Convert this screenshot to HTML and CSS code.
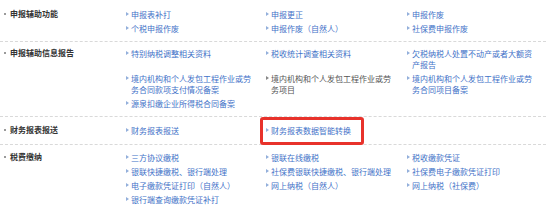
FILE: index.html
```html
<!DOCTYPE html>
<html lang="zh-CN">
<head>
<meta charset="utf-8">
<title>税费申报</title>
<link rel="stylesheet" href="styles.css">
</head>
<body>
<div class="panel">
  <div class="section s1">
    <div class="title">申报辅助功能</div>
    <div class="items">
      <a class="item">申报表补打</a>
      <a class="item">申报更正</a>
      <a class="item">申报作废</a>
      <a class="item">个税申报作废</a>
      <a class="item">申报作废（自然人）</a>
      <a class="item">社保费申报作废</a>
    </div>
  </div>
  <div class="section s2">
    <div class="title">申报辅助信息报告</div>
    <div class="items">
      <a class="item">特别纳税调整相关资料</a>
      <a class="item">税收统计调查相关资料</a>
      <a class="item">欠税纳税人处置不动产或者大额资产报告</a>
      <a class="item">境内机构和个人发包工程作业或劳务合同款项支付情况备案</a>
      <a class="item item-dark">境内机构和个人发包工程作业或劳务项目</a>
      <a class="item">境内机构和个人发包工程作业或劳务合同项目备案</a>
      <a class="item">源泉扣缴企业所得税合同备案</a>
    </div>
  </div>
  <div class="section s3">
    <div class="title">财务报表报送</div>
    <div class="items">
      <a class="item">财务报表报送</a>
      <a class="item item-marked">财务报表数据智能转换<span class="mark"></span></a>
    </div>
  </div>
  <div class="section s4">
    <div class="title">税费缴纳</div>
    <div class="items">
      <a class="item">三方协议缴税</a>
      <a class="item">银联在线缴税</a>
      <a class="item">税收缴款凭证</a>
      <a class="item">银联快捷缴税、银行端处理</a>
      <a class="item">社保费银联快捷缴税、银行端处理</a>
      <a class="item">社保费电子缴款凭证打印</a>
      <a class="item">电子缴款凭证打印（自然人）</a>
      <a class="item">网上纳税（自然人）</a>
      <a class="item">网上纳税（社保费）</a>
      <a class="item">银行端查询缴款凭证补打</a>
    </div>
  </div>
</div>
</body>
</html>
```
FILE: styles.css
```css
html, body {
  margin: 0;
  padding: 0;
  background: #ffffff;
}
body {
  width: 546px;
  height: 212px;
  overflow: hidden;
  font-family: "Noto Sans CJK SC", "Noto Sans", sans-serif;
  font-size: 8px;
  line-height: 11px;
  color: #333333;
}
.panel {
  display: flex;
  flex-direction: column;
}
.section {
  display: grid;
  grid-template-columns: 125px 1fr;
  border-bottom: 1px dashed #d9d9d9;
  padding: 5px 0 6px;
}
.s1 { padding-top: 7px; padding-bottom: 6px; }
.s2 { padding-top: 4px; padding-bottom: 6px; }
.s3 { padding-top: 6px; padding-bottom: 7px; }
.s4 { padding-top: 5px; border-bottom: none; }
.title {
  display: flex;
  align-items: flex-start;
  padding: 1px 0 0 4px;
  font-weight: bold;
  color: #333333;
}
.title::before {
  content: "";
  flex: none;
  width: 2px;
  height: 2px;
  margin: 5px 4px 0 0;
  background: #9a9a9a;
}
.items {
  display: grid;
  grid-template-columns: 140px 141px 140px;
  align-items: start;
}
.item {
  position: relative;
  display: flex;
  align-items: flex-start;
  padding: 2px 12px 1px 0;
  color: #3f72c8;
  text-decoration: none;
}
.item::before {
  content: "";
  flex: none;
  width: 0;
  height: 0;
  margin: 3px 2px 0 1px;
  border-left: 3px solid #93afdb;
  border-top: 2px solid transparent;
  border-bottom: 2px solid transparent;
}
.item-dark {
  color: #555555;
}
.item-dark::before {
  border-left-color: #888888;
}
.mark {
  position: absolute;
  left: -5px;
  top: -6px;
  width: 104px;
  height: 28px;
  box-sizing: border-box;
  border: 3px solid #e8322b;
  border-radius: 3px;
}
```
